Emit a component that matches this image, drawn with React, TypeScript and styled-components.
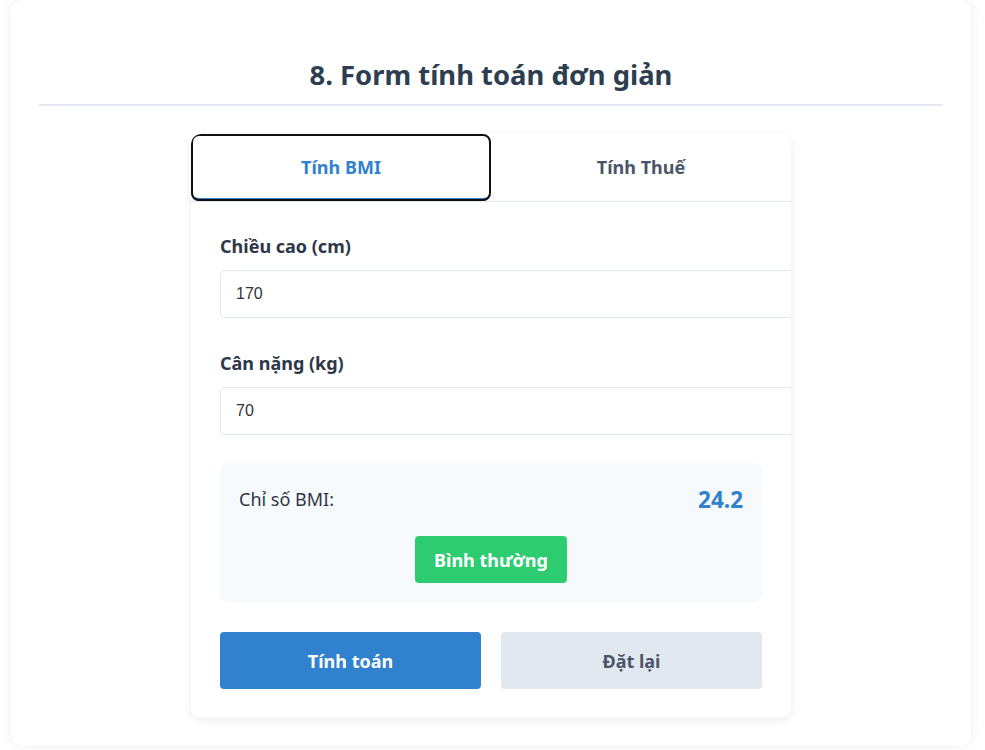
import React, { useState } from "react";
import styled, { createGlobalStyle } from "styled-components";

const GlobalStyle = createGlobalStyle`
  html, body { margin: 0; padding: 0; background: #ffffff; }
  body { font-family: "Noto Sans", "Open Sans", sans-serif; color: #2d3748; }
  * { box-sizing: content-box; }
`;

const Page = styled.div`
  padding: 0 3px 6px 0;
`;

const Section = styled.section`
  width: 904px;
  margin: 0 auto;
  background: #ffffff;
  border-radius: 12px;
  box-shadow: 0 0 12px rgba(0, 0, 0, 0.07);
  padding: 56px 28px 28px;
`;

const Title = styled.h2`
  margin: 0 0 28px;
  padding-bottom: 10px;
  border-bottom: 2px solid #e6e8f4;
  text-align: center;
  font-size: 27.4px;
  line-height: 38px;
  font-weight: 700;
  color: #2c3e50;
`;

const Calculator = styled.div`
  width: 600px;
  margin: 0 auto;
  background: #ffffff;
  border-radius: 10px;
  box-shadow: 0 2px 10px rgba(0, 0, 0, 0.08);
  overflow: hidden;
`;

const Tabs = styled.div`
  display: flex;
  border-bottom: 1px solid #e2e8f0;
`;

const Tab = styled.button<{ $active?: boolean }>`
  flex: 1;
  height: 67px;
  padding: 2px 0 0;
  background: #ffffff;
  border: none;
  border-bottom: 3px solid ${(p) => (p.$active ? "#3182ce" : "transparent")};
  border-radius: ${(p) => (p.$active ? "8px" : "0")};
  outline: ${(p) => (p.$active ? "2px solid #111" : "none")};
  outline-offset: -2px;
  box-sizing: border-box;
  font-family: inherit;
  font-size: 18px;
  font-weight: 700;
  color: ${(p) => (p.$active ? "#3182ce" : "#4a5568")};
  cursor: pointer;
`;

const Body = styled.div`
  padding: 32px 29px 29px;
`;

const Field = styled.div`
  & + & {
    margin-top: 33px;
  }
`;

const Label = styled.label`
  display: block;
  margin-bottom: 11px;
  font-size: 18px;
  line-height: 25px;
  font-weight: 700;
  color: #2d3748;
`;

const Input = styled.input`
  display: block;
  width: 100%;
  padding: 14px 15px;
  border: 1px solid #e2e8f0;
  border-radius: 4px;
  font-family: "Liberation Sans", Arial, sans-serif;
  font-size: 16px;
  line-height: 18px;
  color: #333333;
  background: #ffffff;
  outline: none;
`;

const Result = styled.div`
  margin-top: 28px;
  padding: 20px 19px 19px;
  background: #f7fafc;
  border-radius: 8px;
  box-sizing: border-box;
  display: flex;
  flex-direction: column;
  align-items: center;
`;

const ResultRow = styled.div`
  width: 100%;
  height: 32px;
  display: flex;
  align-items: center;
  justify-content: space-between;
`;

const ResultLabel = styled.span`
  font-size: 18px;
  color: #2d3748;
`;

const ResultValue = styled.span`
  font-size: 22.5px;
  font-weight: 700;
  color: #3182ce;
`;

const Badge = styled.div`
  margin-top: 21px;
  height: 47px;
  line-height: 49px;
  padding: 0 19px;
  background: #2ecc71;
  color: #ffffff;
  border-radius: 4px;
  font-size: 18px;
  font-weight: 700;
  box-sizing: border-box;
`;

const Actions = styled.div`
  margin-top: 30px;
  display: flex;
  gap: 20px;
`;

const Button = styled.button<{ $primary?: boolean }>`
  flex: 1;
  height: 55px;
  border: none;
  border-radius: 4px;
  background: ${(p) => (p.$primary ? "#3182ce" : "#e2e8f0")};
  color: ${(p) => (p.$primary ? "#ffffff" : "#4a5568")};
  font-family: inherit;
  font-size: 18px;
  font-weight: 700;
  cursor: pointer;
`;

export default function App() {
  const [height, setHeight] = useState("170");
  const [weight, setWeight] = useState("70");
  const [tab, setTab] = useState<"bmi" | "tax">("bmi");

  return (
    <Page>
      <GlobalStyle />
      <Section>
        <Title>8. Form tính toán đơn giản</Title>
        <Calculator>
          <Tabs>
            <Tab $active={tab === "bmi"} onClick={() => setTab("bmi")}>
              Tính BMI
            </Tab>
            <Tab $active={tab === "tax"} onClick={() => setTab("tax")}>
              Tính Thuế
            </Tab>
          </Tabs>
          <Body>
            <Field>
              <Label>Chiều cao (cm)</Label>
              <Input value={height} onChange={(e) => setHeight(e.target.value)} />
            </Field>
            <Field>
              <Label>Cân nặng (kg)</Label>
              <Input value={weight} onChange={(e) => setWeight(e.target.value)} />
            </Field>
            <Result>
              <ResultRow>
                <ResultLabel>Chỉ số BMI:</ResultLabel>
                <ResultValue>24.2</ResultValue>
              </ResultRow>
              <Badge>Bình thường</Badge>
            </Result>
            <Actions>
              <Button $primary>Tính toán</Button>
              <Button>Đặt lại</Button>
            </Actions>
          </Body>
        </Calculator>
      </Section>
    </Page>
  );
}
